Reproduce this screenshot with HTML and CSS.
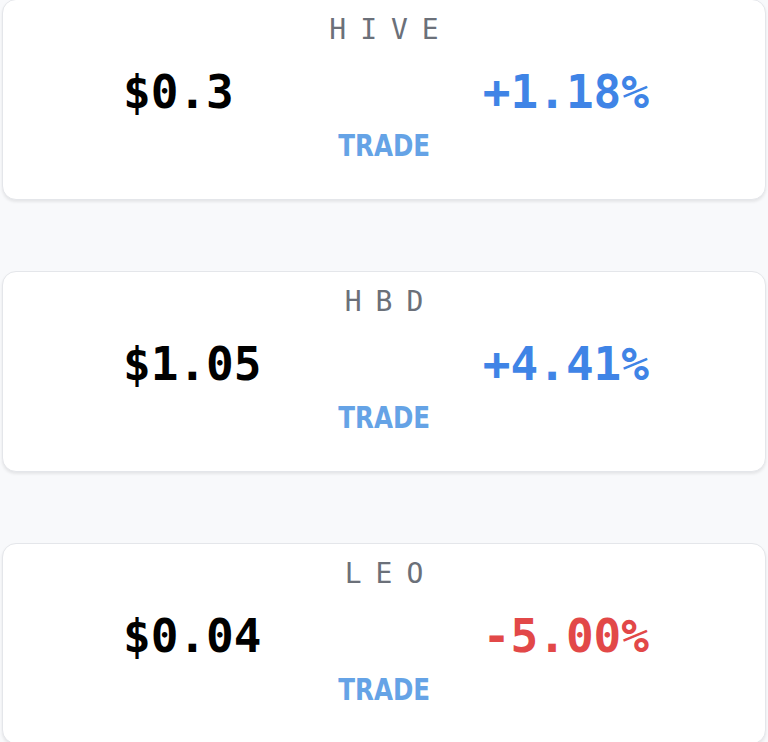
FILE: index.html
```html
<!DOCTYPE html>
<html lang="en">
<head>
<meta charset="utf-8">
<title>Markets</title>
<link rel="stylesheet" href="styles.css">
</head>
<body>
<main class="list">
  <section class="card">
    <div class="symbol">HIVE</div>
    <div class="row">
      <span class="price">$0.3</span>
      <span class="change up">+1.18%</span>
    </div>
    <a class="trade" href="#">TRADE</a>
  </section>
  <section class="card">
    <div class="symbol">HBD</div>
    <div class="row">
      <span class="price">$1.05</span>
      <span class="change up">+4.41%</span>
    </div>
    <a class="trade" href="#">TRADE</a>
  </section>
  <section class="card">
    <div class="symbol">LEO</div>
    <div class="row">
      <span class="price">$0.04</span>
      <span class="change down">-5.00%</span>
    </div>
    <a class="trade" href="#">TRADE</a>
  </section>
</main>
</body>
</html>
```
FILE: styles.css
```css
html, body {
  margin: 0;
  padding: 0;
  background: #f8f9fb;
}
body {
  overflow: hidden;
  height: 742px;
}
.list {
  display: flex;
  flex-direction: column;
  gap: 71px;
  margin: -1px 2px 0;
}
.card {
  background: #ffffff;
  border: 1px solid #e4e6ea;
  border-radius: 14px;
  box-shadow: 0 2px 3px rgba(0, 0, 0, 0.08);
  padding: 16px 0 38px;
  display: flex;
  flex-direction: column;
  align-items: center;
}
.symbol {
  font-family: "DejaVu Sans Mono", monospace;
  font-size: 28px;
  line-height: 28px;
  letter-spacing: 14px;
  padding-left: 14px;
  color: #6b7079;
}
.row {
  align-self: stretch;
  display: flex;
  justify-content: space-between;
  margin-top: 20px;
  padding: 0 116px 0 120px;
  font-family: "DejaVu Sans Mono", monospace;
  font-weight: bold;
  font-size: 46px;
  line-height: 56px;
}
.price { color: #000000; }
.change.up { color: #3f84e6; }
.change.down { color: #e24848; }
.trade {
  display: inline-block;
  margin-top: 9px;
  font-family: "DejaVu Sans", sans-serif;
  font-stretch: condensed;
  font-weight: bold;
  font-size: 31px;
  line-height: 32px;
  color: #65a3e6;
  text-decoration: none;
  transform: scaleX(0.88);
}
```
